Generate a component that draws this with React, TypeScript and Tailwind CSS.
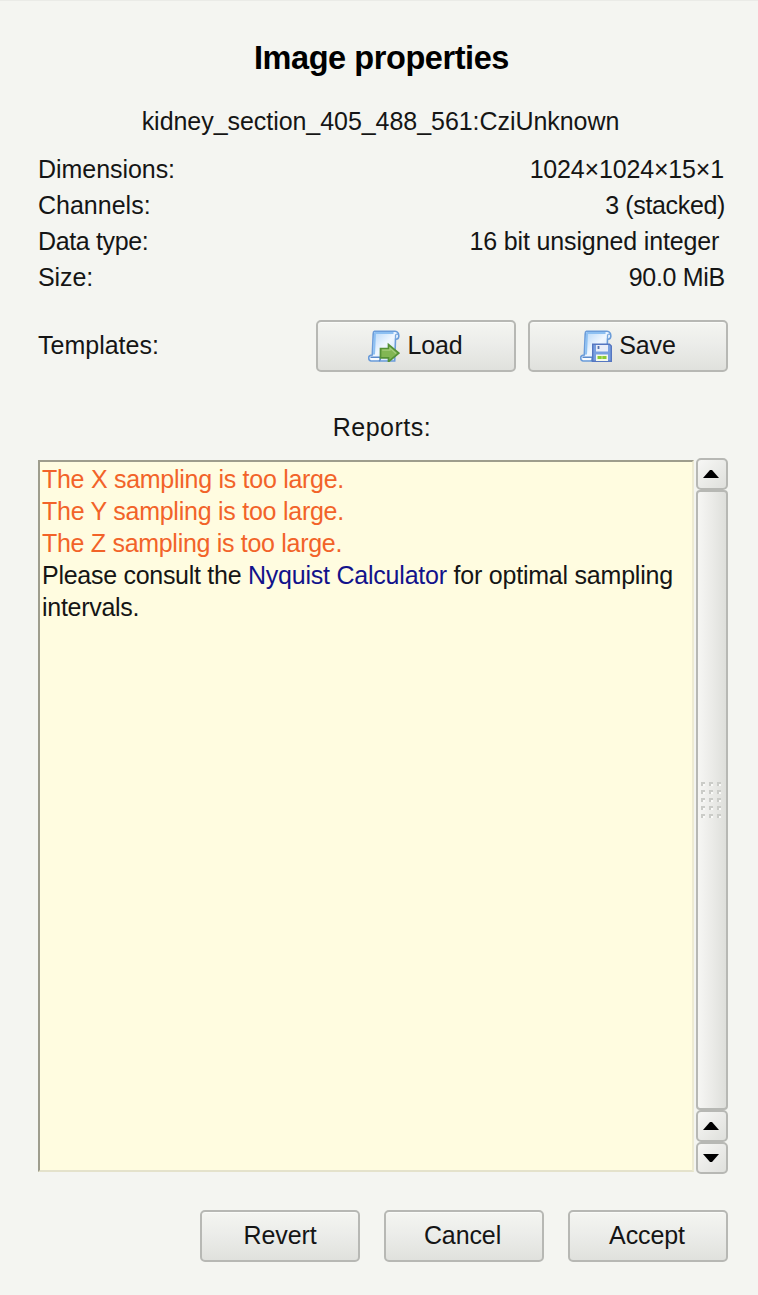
import type { ReactNode } from "react";

function Scroll({ children }: { children: ReactNode }) {
  return (
    <svg className="mt-px h-8 w-8 shrink-0" viewBox="0 0 32 32" fill="none">
      <defs>
        <linearGradient id="paper" x1="0" y1="0" x2="1" y2="1">
          <stop offset="0" stopColor="#a9d0f7" />
          <stop offset="0.5" stopColor="#f0f7ff" />
          <stop offset="1" stopColor="#c3dcf8" />
        </linearGradient>
      </defs>
      <path d="M6.5 1.2H27Q31 1.6 30.8 6.5Q30.5 9.5 27.500 9.300L26.700 31H3Q.5 30.500 .7 27.500Q1 25 4.300 25L5.200 4Q5.200 1.500 6.500 1.200Z" fill="url(#paper)" stroke="#6b9cd9" strokeWidth="1.600" />
      <path d="M7 3H25.500M7 3L6 24.500" stroke="#8dc0f2" strokeWidth="2" />
      <path d="M27.500 9.300V5.500Q28 3.500 30 4.500" stroke="#79a9df" strokeWidth="1.300" />
      <path d="M2.500 27.300H12Q13 30 11 31" stroke="#5a8acb" strokeWidth="1.500" />
      <path d="M3 29H11" stroke="#fff" strokeWidth="1.500" />
      {children}
    </svg>
  );
}

function LoadIcon() {
  return (
    <Scroll>
      <path d="M12.500 18.500H20.500V14.500L30.800 23.200L20.500 31.700V27.800H12.500Z" fill="#82b653" stroke="#559136" strokeWidth="1.700" />
      <path d="M14.200 20.200H22V18L28 23.500" stroke="#a5cc7c" strokeWidth="1.200" />
    </Scroll>
  );
}

function SaveIcon() {
  return (
    <Scroll>
      <path d="M12.700 14.300H29.500L31.300 16V31.300H12.700Z" fill="#789fe0" stroke="#5576c0" strokeWidth="1.400" />
      <path d="M16 15H28V21.500H16Z" fill="#e9edf8" />
      <path d="M18.500 16V19" stroke="#5572ad" strokeWidth="1.800" />
      <path d="M16 24.500H28V31H16Z" fill="#f4f8ec" />
      <path d="M17.500 27.500H26.500" stroke="#8bcb32" strokeWidth="3" />
      <path d="M22 26V29" stroke="#c4e591" strokeWidth="1" />
    </Scroll>
  );
}

function Button({ className, children }: { className: string; children: ReactNode }) {
  return (
    <button
      className={`flex h-[52px] items-center justify-center rounded-[5px] border-2 border-[#b7b8b4] bg-linear-to-b from-[#f4f5f1] via-[#ebece9] to-[#e0e1dd] pb-[2px] shadow-[inset_0_1px_0_#fafbf8] ${className}`}
    >
      {children}
    </button>
  );
}

function Arrow({ down = false }: { down?: boolean }) {
  return (
    <div className="flex h-8 shrink-0 items-center justify-center rounded-[5px] border-2 border-[#b7b8b4] bg-linear-to-br from-[#f7f7f5] to-[#dfe0dc] pr-[2px]">
      <svg className="h-2 w-4 shrink-0" viewBox="0 0 16 8">
        <path d={down ? "M0 0H16L9 8H7Z" : "M0 8H16L9 0H7Z"} fill="#000" />
      </svg>
    </div>
  );
}

function Row({ label, value, left = "", right }: { label: string; value: string; left?: string; right: string }) {
  return (
    <div className="flex h-9 items-center justify-between">
      <span className={left}>{label}</span>
      <span className={`whitespace-pre ${right}`}>{value}</span>
    </div>
  );
}

const dots = Array.from({ length: 15 }, (_, i) => i);

export default function App() {
  return (
    <main className="flex h-[1295px] w-[758px] flex-col border-t border-[#eaebe7] bg-[#f4f5f1] pr-[30px] pl-[38px] font-['Liberation_Sans',Arial,sans-serif] text-[25px] leading-8 tracking-[-0.1px] text-[#151515]">
      <h1 className="mt-[37px] h-10 pr-[3px] text-center text-[32.5px] leading-10 font-bold tracking-[-0.43px] text-black">Image properties</h1>
      <p className="mt-[27px] h-8 pr-[5px] text-center tracking-[-0.05px]">kidney_section_405_488_561:CziUnknown</p>

      <section className="mt-[14px] pr-[3px]">
        <Row label="Dimensions:" value="1024×1024×15×1" left="tracking-[-0.05px]" right="pr-px tracking-[-0.17px]" />
        <Row label="Channels:" value="3 (stacked)" left="tracking-[0px]" right="tracking-[-0.35px]" />
        <Row label="Data type:" value="16 bit unsigned integer " left="tracking-[-0.35px]" right="-mr-[1px] tracking-[-0.14px]" />
        <Row label="Size:" value="90.0 MiB" right="tracking-[-0.3px]" />
      </section>

      <section className="mt-[25px] flex items-center">
        <span className="mr-auto pb-[2px] tracking-[0px]">Templates:</span>
        <Button className="w-[200px] gap-[7px] pr-[1px]"><LoadIcon />Load</Button>
        <Button className="ml-3 w-[200px] gap-[7px]"><SaveIcon />Save</Button>
      </section>

      <h2 className="mt-[39px] h-8 pr-[2px] text-center tracking-[0.5px]">Reports:</h2>

      <section className="mt-[15px] flex h-[716px] items-start justify-between">
        <div className="mt-[2px] h-[712px] w-[656px] border-2 border-t-[#9e9d8d] border-r-[#eeebd2] border-b-[#e4e2cb] border-l-[#9e9d8d] bg-[#fffce0] px-[2px] pt-[1px] tracking-[-0.28px]">
          <p className="text-[#f26329]">The X sampling is too large.</p>
          <p className="text-[#f26329] tracking-[-0.25px]">The Y sampling is too large.</p>
          <p className="text-[#f26329] tracking-[-0.3px]">The Z sampling is too large.</p>
          <p className="flex whitespace-pre">
            <span>{"Please consult the "}</span>
            <a className="text-[#12128b] tracking-[-0.22px]">Nyquist Calculator</a>
            <span className="tracking-[-0.22px]">{" for optimal sampling"}</span>
          </p>
          <p>intervals.</p>
        </div>
        <div className="flex h-[716px] w-8 flex-col">
          <Arrow />
          <div className="flex grow items-center justify-center rounded-[4px] border-2 border-[#b7b8b4] bg-linear-to-r from-[#f6f6f4] via-[#ebebe8] to-[#dedfdb] pr-[2px]">
            <div className="grid grid-cols-3 gap-x-1 gap-y-1">
              {dots.map((dot) => (
                <span key={dot} className="h-1 w-1 border-t-2 border-l-2 border-[#cbccc8] bg-[#fafaf8]" />
              ))}
            </div>
          </div>
          <Arrow />
          <Arrow down />
        </div>
      </section>

      <footer className="mt-9 flex justify-end gap-6">
        <Button className="w-[160px]">Revert</Button>
        <Button className="w-[160px] pr-[3px]">Cancel</Button>
        <Button className="w-[160px] pr-[2px]">Accept</Button>
      </footer>
    </main>
  );
}
